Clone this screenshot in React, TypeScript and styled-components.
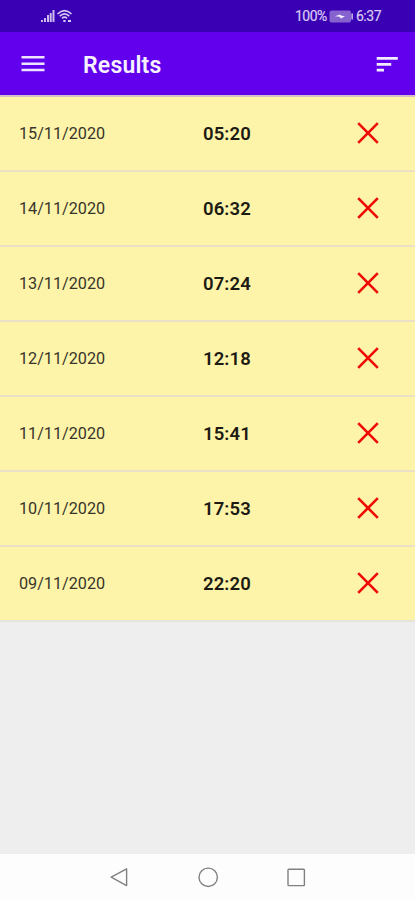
import React from 'react';
import styled, { createGlobalStyle } from 'styled-components';

const GlobalStyle = createGlobalStyle`
  * { box-sizing: border-box; }
  body { margin: 0; background: #eeeeee; font-family: Roboto, sans-serif; }
  svg { display: block; flex: none; }
`;

const Screen = styled.div`
  display: flex;
  flex-direction: column;
  width: 100%;
  height: 100vh;
  min-height: 900px;
  background: #eeeeee;
`;

const StatusBar = styled.div`
  flex: none;
  display: flex;
  align-items: center;
  height: 32px;
  padding: 0 33px 0 40px;
  background: #3a00b4;
  color: #d9cbf3;
`;

const StatusGroup = styled.div<{ $end?: boolean }>`
  display: flex;
  align-items: center;
  margin-left: ${({ $end }) => ($end ? 'auto' : '0')};
`;

const StatusText = styled.span<{ $width: number }>`
  width: ${({ $width }) => $width}px;
  font-size: 14px;
  line-height: 32px;
  letter-spacing: -0.5px;
  white-space: nowrap;
  -webkit-text-stroke: 0.2px currentColor;
`;

const AppBar = styled.header`
  flex: none;
  display: flex;
  align-items: center;
  height: 65px;
  padding: 0 17px 0 21px;
  background: #6200ee;
  border-bottom: 2px solid #d0bfc4;
`;

const Title = styled.h1`
  flex: 1;
  margin: 5px 0 0 38px;
  font-size: 23px;
  font-weight: 600;
  line-height: 32px;
  letter-spacing: 0.2px;
  color: #f6f0ff;
`;

const IconButton = styled.button`
  display: flex;
  padding: 0;
  border: 0;
  background: transparent;
`;

const ResultList = styled.ul`
  flex: 1;
  margin: 0;
  padding: 0;
  list-style: none;
`;

const ResultRow = styled.li`
  display: grid;
  grid-template-columns: 184px 1fr auto;
  align-items: center;
  height: 75px;
  padding: 0 36px 1px 19px;
  background: #fdf4a9;
  border-bottom: 2px solid #ebdfc8;

  &:last-child {
    border-bottom-color: #e5e4d8;
  }
`;

const ResultDate = styled.span`
  margin-top: 1px;
  font-size: 16.2px;
  color: #38342a;
`;

const ResultTime = styled.span`
  margin-top: 1px;
  font-size: 18.5px;
  font-weight: 600;
  letter-spacing: 0.1px;
  color: #1c1a12;
`;

const NavBar = styled.nav`
  flex: none;
  display: flex;
  justify-content: center;
  gap: 64px;
  height: 46px;
  padding-top: 11px;
  background: #fdfdfd;
`;

const SignalIcon = () => (
  <svg width="15" height="14" viewBox="0 0 15 14" fill="#cbbaec">
    <rect x="1" y="11" width="2" height="2" />
    <rect x="4" y="9" width="2" height="4" />
    <rect x="7" y="6" width="2" height="7" />
    <rect x="9.7" y="4" width="2" height="9" />
    <rect x="12.5" y="1" width="2" height="12" />
  </svg>
);

const WifiIcon = () => (
  <svg width="18" height="14" viewBox="0 0 18 14" fill="none" stroke="#d7c9f1" strokeWidth="1.7">
    <path d="M2.5 5Q9.5-1.8 16.5 5" />
    <path d="M4.7 7.2Q9.5 2.6 14.3 7.2" />
    <path d="M7 9.3Q9.5 7 12 9.3" />
    <path d="M8.3 12h2.3M13 12h3" strokeWidth="2" />
  </svg>
);

const BatteryIcon = () => (
  <svg width="27" height="13" viewBox="0 0 27 13">
    <rect x="0.5" y="0.5" width="21.5" height="12" rx="2" fill="#8562cd" />
    <path d="M22.3 3.5h1.7v6h-1.7z" fill="#bda7e6" />
    <path d="M6 6.3l5-1.8 1 1 4 .7-4 2.2-1.5-1.6z" fill="#f6efff" />
  </svg>
);

const MenuIcon = () => (
  <svg width="24" height="18" viewBox="0 0 24 18" fill="#eee3ff">
    <path d="M.5 1.1h23v2.5H.5zM.5 7.5h23V10H.5zM.5 13.8h23v2.5H.5z" />
  </svg>
);

const SortIcon = () => (
  <svg width="22" height="18" viewBox="0 0 22 18" fill="#f4edff">
    <path d="M.7 1.9h21.1v2.9H.7zM.7 7.9h14.5v2.8H.7zM.7 13.7H8v2.7H.7z" />
  </svg>
);

const DeleteIcon = () => (
  <svg width="22" height="22" viewBox="0 0 22 22" fill="none" stroke="#f00b05" strokeWidth="2.6">
    <path d="M1.2 1.2l19.6 19.6M20.8 1.2L1.2 20.8" />
  </svg>
);

const NavIcon = ({ children }: { children: React.ReactNode }) => (
  <svg width="24" height="24" viewBox="0 0 24 24" fill="none" stroke="#808080" strokeWidth="1.4" strokeLinejoin="round">
    {children}
  </svg>
);

const results = [
  { date: '15/11/2020', time: '05:20' },
  { date: '14/11/2020', time: '06:32' },
  { date: '13/11/2020', time: '07:24' },
  { date: '12/11/2020', time: '12:18' },
  { date: '11/11/2020', time: '15:41' },
  { date: '10/11/2020', time: '17:53' },
  { date: '09/11/2020', time: '22:20' },
];

export default function App() {
  return (
    <Screen>
      <GlobalStyle />
      <StatusBar>
        <StatusGroup>
          <SignalIcon />
          <WifiIcon />
        </StatusGroup>
        <StatusGroup $end>
          <StatusText $width={34}>100%</StatusText>
          <BatteryIcon />
          <StatusText $width={26}>6:37</StatusText>
        </StatusGroup>
      </StatusBar>
      <AppBar>
        <IconButton aria-label="Menu"><MenuIcon /></IconButton>
        <Title>Results</Title>
        <IconButton aria-label="Sort"><SortIcon /></IconButton>
      </AppBar>
      <ResultList>
        {results.map(({ date, time }) => (
          <ResultRow key={date}>
            <ResultDate>{date}</ResultDate>
            <ResultTime>{time}</ResultTime>
            <IconButton aria-label="Delete"><DeleteIcon /></IconButton>
          </ResultRow>
        ))}
      </ResultList>
      <NavBar>
        <NavIcon><path d="M3.2 12.2L18.6 3.8v16.8z" /></NavIcon>
        <NavIcon><circle cx="12.2" cy="12.3" r="9.2" /></NavIcon>
        <NavIcon><rect x="4" y="4.2" width="16.4" height="16.4" rx="0.8" /></NavIcon>
      </NavBar>
    </Screen>
  );
}
